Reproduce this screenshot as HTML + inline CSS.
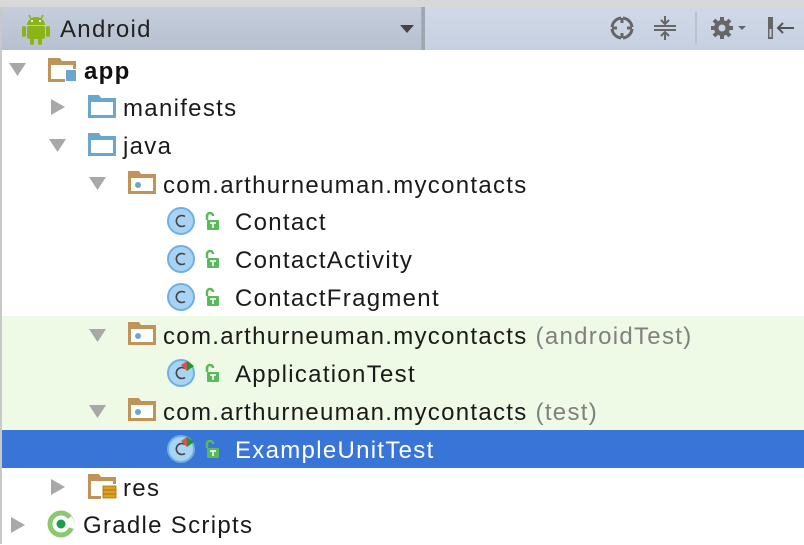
<!DOCTYPE html>
<html><head><meta charset="utf-8"><style>
*{margin:0;padding:0;box-sizing:border-box}
body{width:804px;height:544px;overflow:hidden;background:#fff;font-family:"Liberation Sans","DejaVu Sans",sans-serif;position:relative}
.a{position:absolute}
.t{position:absolute;font-size:24px;line-height:38px;color:#1a1a1a;white-space:nowrap;letter-spacing:1.3px;margin-top:2px}
.g{color:#808080}
</style></head><body>
<div class="a" style="left:0;top:0;width:804px;height:7px;background:#d8d8d8"></div>
<div class="a" style="left:0;top:7px;width:804px;height:43px;background:linear-gradient(#d0d9e8,#c6d0e0)"></div>
<div class="a" style="left:2px;top:7px;width:420px;height:43px;background:linear-gradient(#c6cedc,#b7c0d0);border-right:1px solid #a8b0bd"></div>
<div class="a" style="left:422px;top:7px;width:3px;height:43px;background:#9ea6b2"></div>
<div class="a" style="left:0;top:7px;width:2px;height:537px;background:#c8c8c8"></div>
<svg class="a" style="left:22px;top:13px" width="28" height="32" viewBox="0 0 28 32">
<g fill="#8bb31a"><path d="M5 12a9 8 0 0 1 18 0z"/><rect x="5" y="13" width="18" height="13" rx="2"/><rect x="0" y="13" width="4" height="11" rx="2"/><rect x="24" y="13" width="4" height="11" rx="2"/><rect x="8" y="24" width="4" height="8" rx="2"/><rect x="16" y="24" width="4" height="8" rx="2"/>
<path d="M7 2l2 4M21 2l-2 4" stroke="#8bb31a" stroke-width="1.5"/></g>
<circle cx="10" cy="8" r="1" fill="#fff"/><circle cx="18" cy="8" r="1" fill="#fff"/></svg>
<div class="t" style="left:60px;top:9px;color:#222">Android</div>
<svg class="a" style="left:400px;top:25px" width="16" height="10"><path d="M0 0h14l-7 8z" fill="#444"/></svg>
<svg class="a" style="left:608px;top:14px" width="28" height="28" viewBox="0 0 28 28"><circle cx="14" cy="14" r="10" fill="none" stroke="#666" stroke-width="3"/><path d="M14 2v7M14 19v7M2 14h7M19 14h7" stroke="#c8d2e2" stroke-width="2"/><path d="M14 4v5M14 19v5M4 14h5M19 14h5" stroke="#666" stroke-width="3"/></svg>
<svg class="a" style="left:653px;top:14px" width="24" height="28" viewBox="0 0 24 28"><path d="M1 12h22M1 16h22" stroke="#666" stroke-width="2"/><path d="M12 2v7M8 6l4 4 4-4M12 26v-7M8 22l4-4 4 4" stroke="#666" stroke-width="2" fill="none"/></svg>
<div class="a" style="left:695px;top:12px;width:2px;height:32px;background:#b8c1cf"></div>
<svg class="a" style="left:710px;top:15px" width="40" height="26" viewBox="0 0 40 26"><g transform="translate(12 13)"><circle r="8" fill="#666"/><g stroke="#666" stroke-width="4"><path d="M0 -11V11M-11 0H11M-8 -8L8 8M-8 8L8 -8"/></g><circle r="3.5" fill="#c8d2e2"/></g><path d="M28 11h8l-4 4z" fill="#666"/></svg>
<svg class="a" style="left:766px;top:14px" width="30" height="28" viewBox="0 0 30 28"><rect x="2" y="3" width="5" height="22" fill="#666"/><rect x="3.5" y="15" width="2" height="8" fill="#c8d2e2"/><path d="M12 14h16M17 9l-5 5 5 5" stroke="#555" stroke-width="2" fill="none"/></svg>
<div class="a" style="left:2px;top:316px;width:802px;height:114px;background:#eef9e6"></div>
<div class="a" style="left:2px;top:430px;width:802px;height:38px;background:#3875d7"></div>
<svg class="a" style="left:0;top:50px" width="110" height="494">
<g fill="#a8a8a8">
<path d="M9 13h17l-8.5 13z"/>
<path d="M51 49l14 8-14 8z"/>
<path d="M49 89h17l-8.5 13z"/>
<path d="M89 127h17l-8.5 13z"/>
<path d="M89 279h17l-8.5 13z"/>
<path d="M89 355h17l-8.5 13z"/>
<path d="M51 429l14 8-14 8z"/>
<path d="M11 467l14 8-14 8z"/>
</g></svg>
<svg class="a" style="left:48px;top:58px" width="32" height="26"><path d="M0 0h12l2 3h14v8h-3V7H3v14h14v3H0z" fill="#c09358"/><rect x="18" y="12" width="10" height="11" fill="#6aa7cc"/></svg>
<div class="t" style="left:84px;top:51px;font-weight:bold;color:#111">app</div>
<svg class="a" style="left:88px;top:95px" width="30" height="24"><path d="M0 0h11l2 3h15v20H0z" fill="#6aa7cc"/><rect x="3" y="7" width="22" height="13" fill="#fff"/></svg>
<div class="t" style="left:123px;top:88px">manifests</div>
<svg class="a" style="left:88px;top:133px" width="30" height="24"><path d="M0 0h11l2 3h15v20H0z" fill="#6aa7cc"/><rect x="3" y="7" width="22" height="13" fill="#fff"/></svg>
<div class="t" style="left:123px;top:126px">java</div>
<svg class="a" style="left:128px;top:171px" width="30" height="24"><path d="M0 0h11l2 3h15v20H0z" fill="#c09358"/><rect x="3" y="7" width="22" height="13" fill="#fff"/><circle cx="10" cy="14" r="3" fill="#6aa7cc"/></svg>
<div class="t" style="left:163px;top:165px">com.arthurneuman.mycontacts</div>
<svg class="a" style="left:128px;top:322px" width="30" height="24"><path d="M0 0h11l2 3h15v20H0z" fill="#c09358"/><rect x="3" y="7" width="22" height="13" fill="#fff"/><circle cx="10" cy="14" r="3" fill="#6aa7cc"/></svg>
<div class="t" style="left:163px;top:316px">com.arthurneuman.mycontacts <span class="g">(androidTest)</span></div>
<svg class="a" style="left:128px;top:398px" width="30" height="24"><path d="M0 0h11l2 3h15v20H0z" fill="#c09358"/><rect x="3" y="7" width="22" height="13" fill="#fff"/><circle cx="10" cy="14" r="3" fill="#6aa7cc"/></svg>
<div class="t" style="left:163px;top:392px">com.arthurneuman.mycontacts <span class="g">(test)</span></div>
<svg class="a" style="left:165px;top:204px" width="60" height="280">
<defs>
<g id="c"><circle cx="16" cy="17" r="13" fill="#a9d3f3" stroke="#6fb0e3" stroke-width="2"/><path d="M20 12.5a5.5 5.5 0 1 0 0 9" fill="none" stroke="#444" stroke-width="1.6"/></g>
<g id="l"><path d="M42 16v-4a3 3 0 0 1 6 0" fill="none" stroke="#5cb85c" stroke-width="2.5"/><rect x="42" y="16" width="12" height="10" rx="1" fill="#5cb85c"/><path d="M45 19h6M48 19v5" stroke="#fff" stroke-width="1.5"/></g>
</defs>
<use href="#c"/><use href="#l"/>
<g transform="translate(0 38)"><use href="#c"/><use href="#l"/></g>
<g transform="translate(0 76)"><use href="#c"/><use href="#l"/></g>
<g transform="translate(0 152)"><use href="#c"/><use href="#l"/><g transform="translate(-1 5)"><path d="M17 4l6-4v10z" fill="#d9534f"/><path d="M23 0l7 5-7 5z" fill="#1a9a2a"/></g></g>
<g transform="translate(0 228)"><use href="#c"/><use href="#l"/><g transform="translate(-1 5)"><path d="M17 4l6-4v10z" fill="#d9534f"/><path d="M23 0l7 5-7 5z" fill="#1a9a2a"/></g></g>
</svg>
<div class="t" style="left:235px;top:202px">Contact</div>
<div class="t" style="left:235px;top:240px">ContactActivity</div>
<div class="t" style="left:235px;top:278px">ContactFragment</div>
<div class="t" style="left:235px;top:354px">ApplicationTest</div>
<div class="t" style="left:235px;top:430px;color:#fff">ExampleUnitTest</div>
<svg class="a" style="left:88px;top:474px" width="32" height="28"><path d="M0 0h11l2 3h15v7h-3V7H3v15h10v3H0z" fill="#c09358"/><g fill="#e0a020" stroke="#a87010" stroke-width="0.8"><rect x="15" y="12" width="13" height="4"/><rect x="15" y="16" width="13" height="4"/><rect x="15" y="20" width="13" height="4"/></g></svg>
<div class="t" style="left:123px;top:468px">res</div>
<svg class="a" style="left:47px;top:510px" width="30" height="30" viewBox="0 0 30 30"><circle cx="14" cy="14" r="11" fill="none" stroke="#8cc870" stroke-width="5"/><path d="M22 8a11 11 0 0 1 2 10" stroke="#fff" stroke-width="6" fill="none"/><circle cx="14" cy="14" r="4.5" fill="#1a9e4a"/></svg>
<div class="t" style="left:83px;top:505px">Gradle Scripts</div>
</body></html>
